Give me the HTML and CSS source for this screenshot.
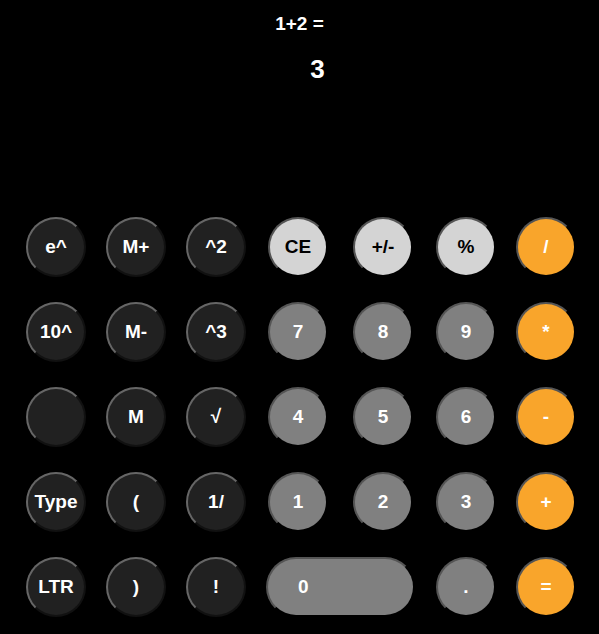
FILE: index.html
```html
<!DOCTYPE html>
<html>
<head>
<meta charset="utf-8">
<title>Calculator</title>
<link rel="stylesheet" href="styles.css">
</head>
<body>
<div class="calc">
  <div class="display">
    <div class="expr">1+2 =</div>
    <div class="result">3</div>
  </div>
  <div class="keys">
    <button class="key dark">e^</button>
    <button class="key dark">M+</button>
    <button class="key dark">^2</button>
    <button class="key light">CE</button>
    <button class="key light">+/-</button>
    <button class="key light">%</button>
    <button class="key op">/</button>

    <button class="key dark">10^</button>
    <button class="key dark">M-</button>
    <button class="key dark">^3</button>
    <button class="key num">7</button>
    <button class="key num">8</button>
    <button class="key num">9</button>
    <button class="key op">*</button>

    <button class="key dark"></button>
    <button class="key dark">M</button>
    <button class="key dark">√</button>
    <button class="key num">4</button>
    <button class="key num">5</button>
    <button class="key num">6</button>
    <button class="key op">-</button>

    <button class="key dark">Type</button>
    <button class="key dark">(</button>
    <button class="key dark">1/</button>
    <button class="key num">1</button>
    <button class="key num">2</button>
    <button class="key num">3</button>
    <button class="key op">+</button>

    <button class="key dark">LTR</button>
    <button class="key dark">)</button>
    <button class="key dark">!</button>
    <button class="key num zero">0</button>
    <button class="key num">.</button>
    <button class="key op">=</button>
  </div>
</div>
</body>
</html>
```

FILE: styles.css
```css
html, body {
  margin: 0;
  padding: 0;
  background: #000;
}

body {
  font-family: "Liberation Sans", Arial, sans-serif;
  color: #fff;
}

.calc {
  width: 599px;
  height: 634px;
  overflow: hidden;
}

.display {
  padding-top: 13px;
  text-align: center;
  font-weight: bold;
}

.expr {
  font-size: 19px;
}

.result {
  margin-top: 19px;
  padding-left: 36px;
  font-size: 26px;
}

.keys {
  margin-top: 132px;
  padding-left: 26px;
  display: grid;
  grid-template-columns: 80px 80px 82px 85px 83px 80px 60px;
  grid-auto-rows: 60px;
  row-gap: 25px;
}

.key {
  box-sizing: border-box;
  width: 60px;
  height: 60px;
  border-radius: 30px;
  border: 2px outset #666;
  padding: 0;
  margin: 0;
  font-family: "Liberation Sans", Arial, sans-serif;
  font-size: 19px;
  font-weight: bold;
  color: #fff;
  display: flex;
  align-items: center;
  justify-content: center;
}

.dark {
  background: #212121;
}

.light {
  background: #d4d4d4;
  color: #000;
  border-color: #555;
}

.num {
  background: #808080;
  border-color: #555;
}

.op {
  background: #f9a52b;
  border-color: #555;
}

.zero {
  grid-column: span 2;
  width: 149px;
  margin-left: -2px;
  justify-content: flex-start;
  padding-left: 30px;
}
```
